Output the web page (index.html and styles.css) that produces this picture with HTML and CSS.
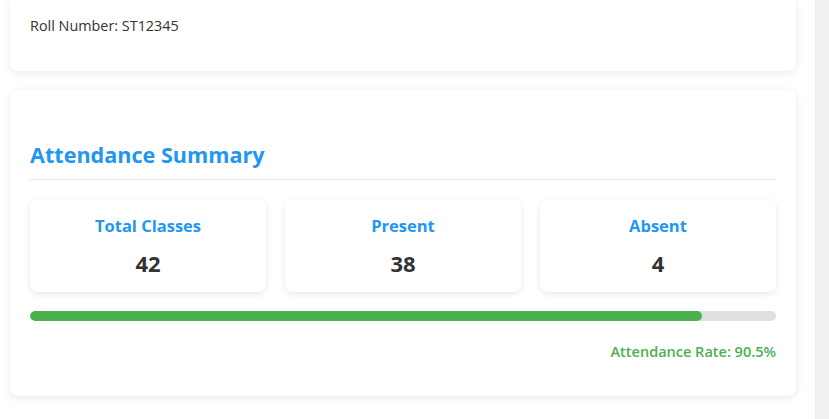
FILE: index.html
```html
<!DOCTYPE html>
<html lang="en">
<head>
<meta charset="utf-8">
<title>Student Attendance</title>
<link rel="stylesheet" href="styles.css">
</head>
<body>
<div class="page">
  <main class="content">
    <section class="card card-top">
      <p class="info">Roll Number: ST12345</p>
    </section>
    <section class="card summary">
      <h2 class="summary-title">Attendance Summary</h2>
      <div class="stats">
        <div class="stat">
          <div class="stat-label">Total Classes</div>
          <div class="stat-value">42</div>
        </div>
        <div class="stat">
          <div class="stat-label">Present</div>
          <div class="stat-value">38</div>
        </div>
        <div class="stat">
          <div class="stat-label">Absent</div>
          <div class="stat-value">4</div>
        </div>
      </div>
      <div class="progress"><div class="progress-fill" style="width: 90.1%"></div></div>
      <p class="rate">Attendance Rate: 90.5%</p>
    </section>
  </main>
  <div class="scrollbar"></div>
</div>
</body>
</html>
```
FILE: styles.css
```css
html, body {
  margin: 0;
  padding: 0;
  background: #ffffff;
  height: 100%;
  overflow: hidden;
}
body {
  font-family: "Open Sans", "Noto Sans", sans-serif;
  color: #333333;
}
.page {
  display: flex;
  height: 100vh;
}
.content {
  flex: 1;
  padding: 0 19px 0 10px;
  display: flex;
  flex-direction: column;
  gap: 19px;
}
.card {
  background: #ffffff;
  border-radius: 8px;
  box-shadow: 0 2px 8px rgba(0, 0, 0, 0.09);
  padding: 20px;
}
.card-top {
  border-radius: 0 0 8px 8px;
  padding-top: 16px;
}
.info {
  margin: 0 0 15px;
  font-size: 14.4px;
  line-height: 20px;
}
.summary-title {
  margin: 30px 0 0;
  padding-bottom: 10px;
  border-bottom: 1px solid #e8e8e8;
  color: #2196f3;
  font-size: 21.6px;
  line-height: 29px;
  font-weight: 700;
}
.stats {
  display: grid;
  grid-template-columns: repeat(3, 1fr);
  gap: 19px;
  margin-top: 19px;
}
.stat {
  border-radius: 8px;
  box-shadow: 0 2px 6px rgba(0, 0, 0, 0.09);
  padding: 15px 10px 13px;
  text-align: center;
}
.stat-label {
  color: #2196f3;
  font-weight: 700;
  font-size: 16.5px;
  line-height: 24px;
}
.stat-value {
  margin-top: 9px;
  font-weight: 700;
  font-size: 22px;
  line-height: 32px;
  color: #333333;
}
.progress {
  margin-top: 19px;
  height: 10px;
  border-radius: 5px;
  background: #e0e0e0;
  overflow: hidden;
}
.progress-fill {
  height: 100%;
  background: #4caf50;
  border-radius: 5px;
}
.rate {
  margin: 21px 0 14px;
  text-align: right;
  color: #4caf50;
  font-weight: 600;
  font-size: 14.5px;
  line-height: 20px;
}
.scrollbar {
  width: 13px;
  flex: none;
  background: #f1f1f1;
  border-left: 1px solid #ebebeb;
}
```
